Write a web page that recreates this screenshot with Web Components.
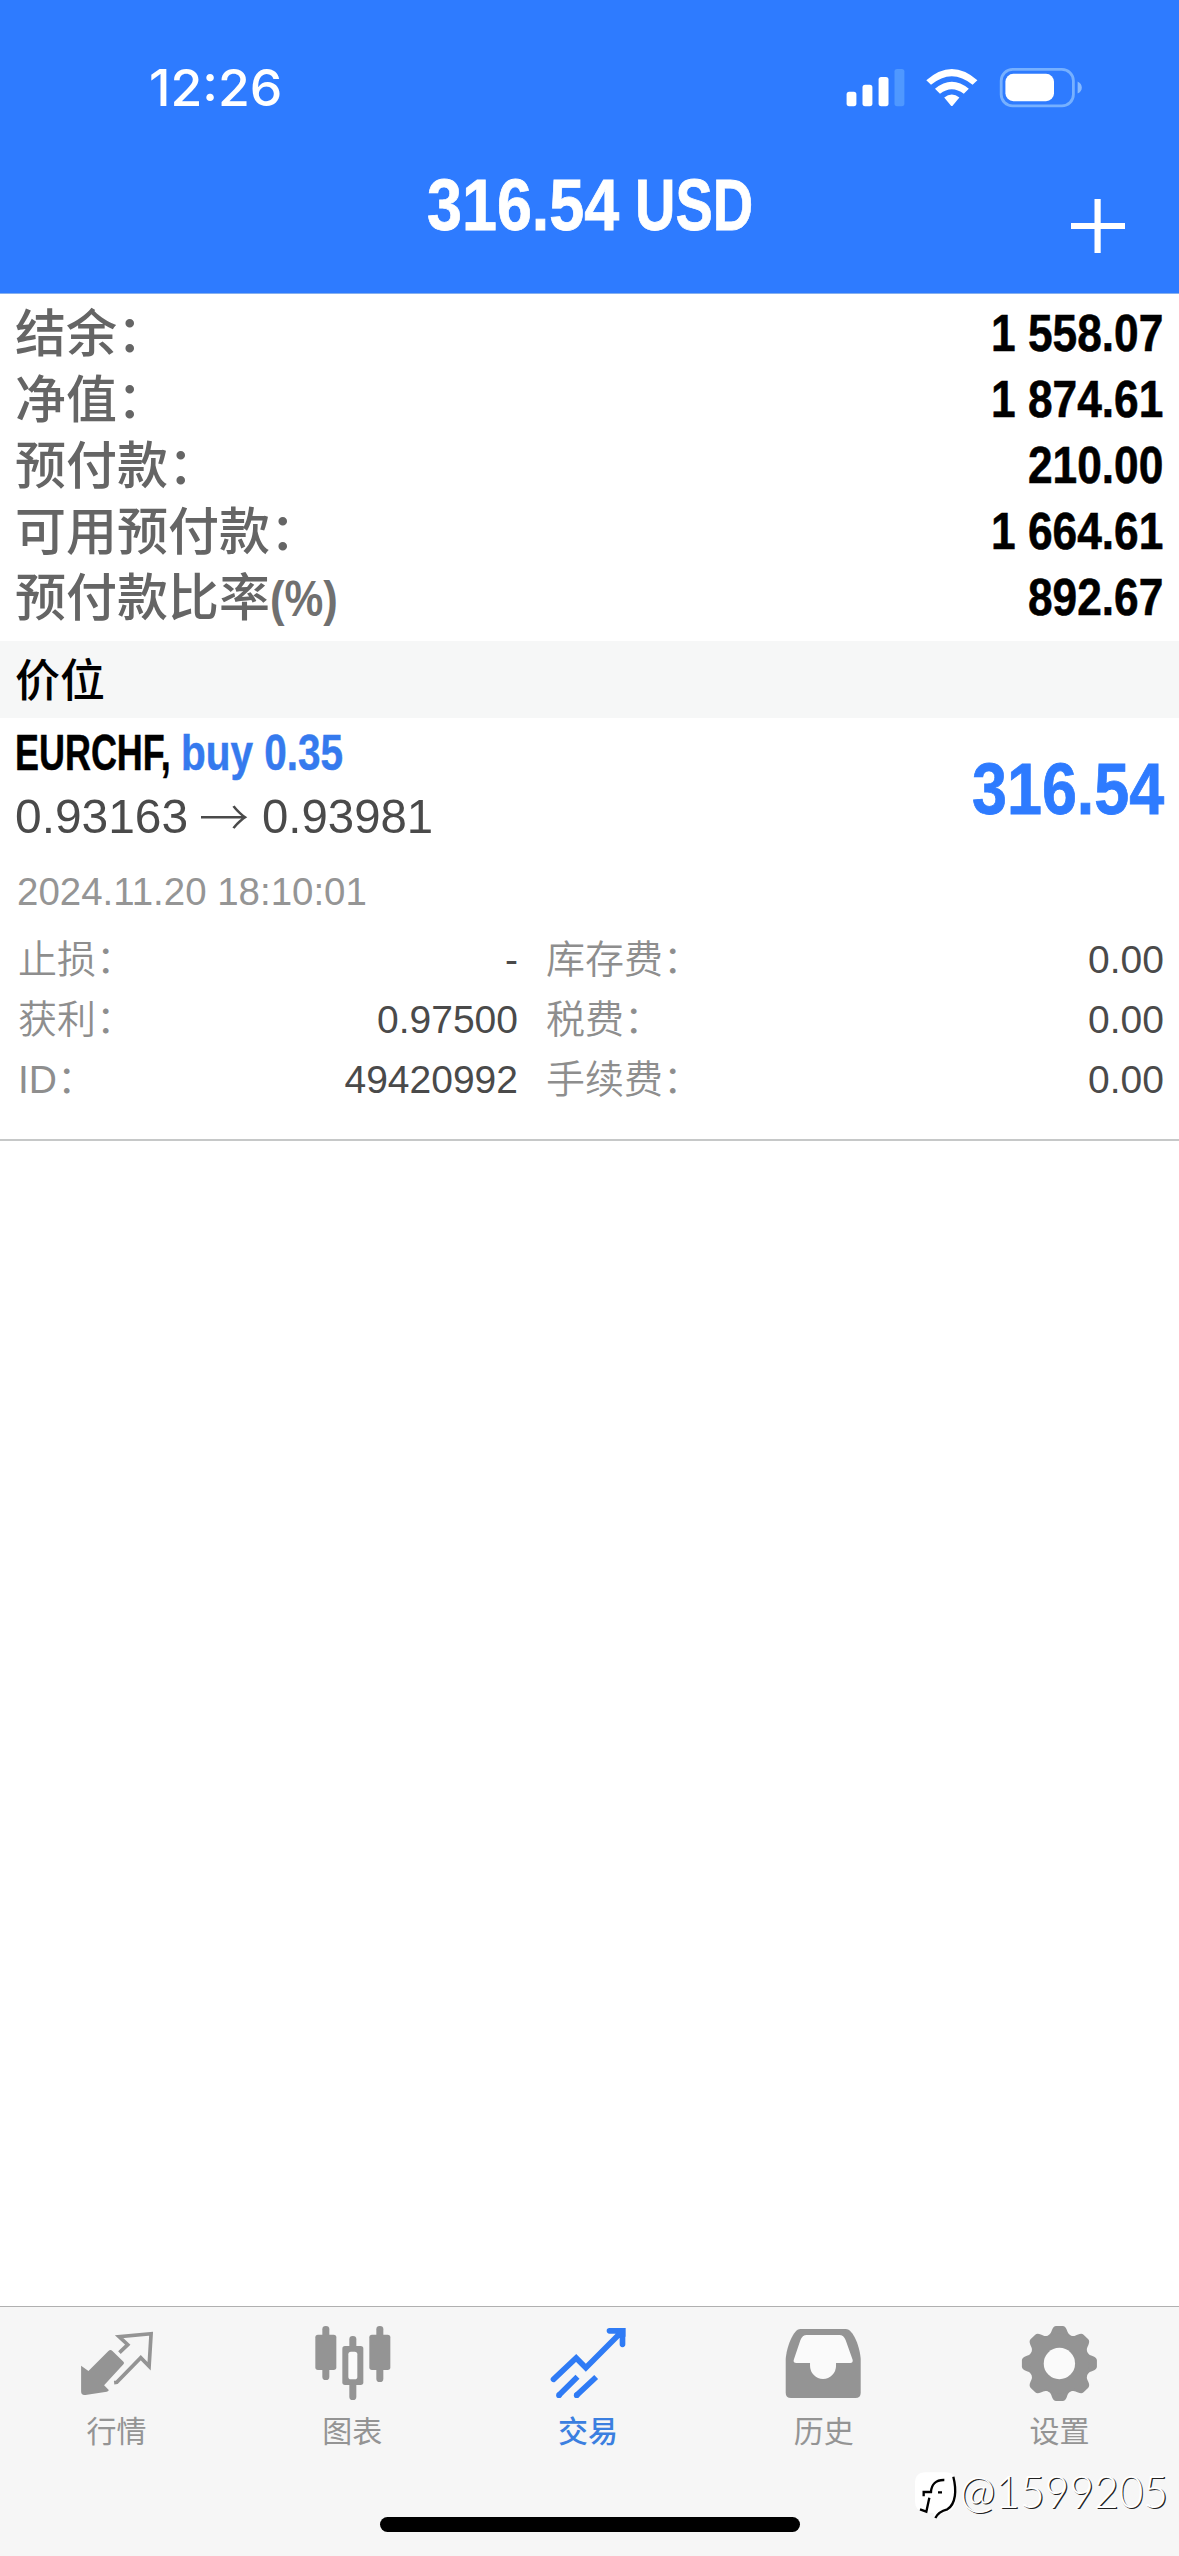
<!DOCTYPE html>
<html lang="zh-CN">
<head>
<meta charset="utf-8">
<title>316.54 USD</title>
<style>
html,body{margin:0;padding:0;background:#fff}
body{font-family:"Liberation Sans","Noto Sans CJK SC",sans-serif;width:1179px;height:2556px;overflow:hidden}
</style>
</head>
<body>
<trade-app></trade-app>
<script>
const define = (name, html, after) => customElements.define(name, class extends HTMLElement {
  constructor() {
    super();
    this.attachShadow({ mode: 'open' }).innerHTML = html;
  }
  connectedCallback() { if (after) after.call(this, this.shadowRoot); }
});

/* Text condensed or widened to the advance width given in "w" */
define('fit-text', `<style>
:host{display:inline-block;white-space:nowrap;text-align:left;flex:none}
span{display:inline-block;transform-origin:0 50%}
</style><span><slot></slot></span>`, function (root) {
  const w = +this.getAttribute('w'), s = root.querySelector('span');
  this.style.width = w + 'px';
  s.style.transform = `scaleX(${w / s.offsetWidth})`;
});

define('status-bar', `<style>
:host{display:flex;height:82px;padding:58px 94px 0 149px;justify-content:space-between;color:#fff}
.time{font:550 50.5px/60px Inter,sans-serif}
svg{display:block;width:240px;height:50px;margin-top:4px}
</style>
<fit-text class="time" w="133">12:26</fit-text>
<svg viewBox="845 62 240 50" fill="#fff">
<rect x="846.6" y="91.8" width="9.8" height="14.4" rx="2.6"/>
<rect x="862.5" y="84.8" width="9.9" height="21.4" rx="2.6"/>
<rect x="878.6" y="77" width="9.9" height="29.2" rx="2.6"/>
<rect x="894.5" y="69" width="9.9" height="37.2" rx="2.6" fill="#4f98ff"/>
<path d="M926.3 80.2Q951.8 57.6 977.4 80.2L972.6 84.8Q951.8 67.6 931 84.8Z"/>
<path d="M935 88.8Q951.8 74.8 968.8 88.8L963.8 93.7Q951.8 84.6 940 93.7Z"/>
<path d="M944.2 97.4Q951.8 91.6 959.4 97.4L952.8 105.4Q951.8 106.4 950.8 105.4Z"/>
<rect x="1001.2" y="69.3" width="72.2" height="36.6" rx="11.5" fill="none" stroke="#76b0ff" stroke-width="2.8"/>
<rect x="1005.4" y="73.8" width="48.6" height="27.4" rx="8"/>
<path d="M1077.6 81.5Q1081.8 83.5 1081.8 87.5T1077.6 93.5Z" fill="#86b9ff"/>
</svg>`);

define('nav-header', `<style>
:host{display:block;height:293px;background:#2e7bff;border-bottom:1px solid #86b0ee}
nav{display:grid;grid-template-columns:1fr auto 1fr;padding-top:25px;color:#fff}
.title{grid-column:2;display:flex;gap:16px;font:700 73px/80px "Liberation Sans Narrow","Liberation Sans",sans-serif;-webkit-text-stroke:.8px #fff}
svg{width:56px;height:56px;justify-self:end;margin:33px 53px 0 0}
</style>
<status-bar></status-bar>
<nav><div class="title"><fit-text w="192">316.54</fit-text><fit-text w="118">USD</fit-text></div>
<svg viewBox="0 0 56 56"><path d="M1 28H55M27.6 1V55" stroke="#fff" stroke-width="6.2"/></svg></nav>`);

define('summary-row', `<style>
:host{display:flex;justify-content:space-between;height:66px;line-height:66px}
.l{font:500 51px/66px "Liberation Sans","Noto Sans CJK SC",sans-serif;color:#656565}
.v{font:700 51.6px/66px "Liberation Sans Narrow","Liberation Sans",sans-serif;color:#000;-webkit-text-stroke:.6px #000;margin-top:-2px}
</style><div class="l"><slot name="label"></slot></div><div class="v"><slot name="value"></slot></div>`);

define('account-summary', `<style>
:host{display:block;height:339px;padding:8px 16px 0 15px}
.p{font-family:"Liberation Sans Narrow","Liberation Sans",sans-serif;font-weight:700;font-size:50px;color:#707070}
</style>
<summary-row><span slot="label">结余：</span><fit-text slot="value" w="172.4">1 558.07</fit-text></summary-row>
<summary-row><span slot="label">净值：</span><fit-text slot="value" w="172.4">1 874.61</fit-text></summary-row>
<summary-row><span slot="label">预付款：</span><fit-text slot="value" w="135.4">210.00</fit-text></summary-row>
<summary-row><span slot="label">可用预付款：</span><fit-text slot="value" w="172.4">1 664.61</fit-text></summary-row>
<summary-row><span slot="label">预付款比率<fit-text class="p" w="68">(%)</fit-text></span><fit-text slot="value" w="135.4">892.67</fit-text></summary-row>`);

define('section-title', `<style>
:host{display:block;height:75px;padding:2px 15px 0;background:#f6f7f7;color:#000;font:500 45px/77px "Liberation Sans","Noto Sans CJK SC",sans-serif}
</style><slot></slot>`);

define('detail-row', `<style>
:host{display:flex;justify-content:space-between;height:60px;font-size:39px;line-height:60px;white-space:nowrap}
.l{color:#8e8e8e;font-weight:350}
.v{color:#4a4a4a}
</style><span class="l"><slot name="label"></slot></span><span class="v"><slot></slot></span>`);

define('position-card', `<style>
:host{display:block;height:416px;padding:5px 0 0;border-bottom:2px solid #c6c8c8;font-family:"Liberation Sans","Noto Sans CJK SC",sans-serif}
.top{display:flex;justify-content:space-between;padding:0 15px 0 15px}
.sym{display:flex;font:700 50px/60px "Liberation Sans Narrow","Liberation Sans",sans-serif;gap:10px;color:#000;-webkit-text-stroke:.5px currentColor}
.buy{color:#357aee}
.price{display:flex;align-items:center;margin:3px 0 0;font-size:49px;line-height:60px;color:#4a4a4a}
.arrow{font-family:"Noto Sans CJK SC",sans-serif;font-weight:300;font-size:50px;line-height:60px;width:50px;margin:-5px 13px 0 11px}
.date{margin:26px 0 0 17px;font-size:38px;line-height:40px;color:#959595}
.profit{font:700 73px/80px "Liberation Sans Narrow","Liberation Sans",sans-serif;color:#2e7bff;-webkit-text-stroke:.8px currentColor;margin-top:26px}
.grid{display:grid;grid-template-columns:500px 618px;column-gap:28px;padding:18px 0 0 18px}
</style>
<div class="top"><div>
<div class="sym"><fit-text w="156">EURCHF,</fit-text><fit-text class="buy" w="162">buy 0.35</fit-text></div>
<div class="price"><fit-text w="173">0.93163</fit-text><span class="arrow">→</span><fit-text w="171">0.93981</fit-text></div>
</div><fit-text class="profit" w="192">316.54</fit-text></div>
<div class="date"><fit-text w="350">2024.11.20 18:10:01</fit-text></div>
<div class="grid">
<detail-row><span slot="label">止损：</span>-</detail-row>
<detail-row><span slot="label">库存费：</span>0.00</detail-row>
<detail-row><span slot="label">获利：</span>0.97500</detail-row>
<detail-row><span slot="label">税费：</span>0.00</detail-row>
<detail-row><span slot="label">ID：</span>49420992</detail-row>
<detail-row><span slot="label">手续费：</span>0.00</detail-row>
</div>`);

define('tab-item', `<style>
:host{display:flex;flex:1;flex-direction:column;align-items:center;gap:8px;color:#949494}
:host([active]){color:#2f7bf5}
div{width:80px;height:84px}
span{font:400 30px/40px "Liberation Sans","Noto Sans CJK SC",sans-serif;margin-left:-3px}
:host([active]) span{font-weight:500;color:#3b7fe0}
</style><div><slot name="icon"></slot></div><span><slot></slot></span>`);

define('tab-bar', `<style>
:host{display:block;height:249px;background:#f6f6f6;border-top:1px solid #b0b0b0}
.tabs{display:flex;padding-top:13px}
svg{display:block;width:80px;height:84px}
.home{width:420px;height:15px;border-radius:8px;background:#000;margin:65px auto 0}
</style>
<div class="tabs">
<tab-item><svg slot="icon" viewBox="233.7 90 240 252" fill="currentColor">
<path d="M243 227L265 243L325 183Q331 177 337 183L370 215Q374 219 370 223L312 286L326 300Q326 304 320 305L256 315Q243 317 243 304Z"/>
<path d="M358 188L383 164L357 140L453 131L447 229L422 203L350 277L342 278" fill="none" stroke="currentColor" stroke-width="11"/></svg>行情</tab-item>
<tab-item><svg slot="icon" viewBox="941 90 240 252" fill="currentColor">
<rect x="966" y="108" width="21" height="162" rx="10"/><rect x="945" y="134" width="63" height="106" rx="8"/>
<rect x="1047" y="138" width="21" height="192" rx="10"/><rect x="1026" y="168" width="63" height="117" rx="8"/><rect x="1044" y="185" width="27" height="83" rx="8" fill="#fafafa"/>
<rect x="1128" y="108" width="21" height="168" rx="10"/><rect x="1107" y="134" width="63" height="106" rx="8"/></svg>图表</tab-item>
<tab-item active><svg slot="icon" viewBox="328.5 90 240 252" fill="none" stroke="currentColor" stroke-width="17">
<path d="M342 268L410 204L439 233L545 127M510 122.5H549V163" stroke-linecap="round"/>
<path d="M536 114H558V140L530 142Z" fill="currentColor" stroke="none"/>
<path d="M358 316L414 260M411 316L470 261"/>
<g fill="currentColor" stroke="none"><circle cx="358.5" cy="315.5" r="8.5"/><circle cx="411.5" cy="315.5" r="8.5"/></g></svg>交易</tab-item>
<tab-item><svg slot="icon" viewBox="75.9 90 240 252" fill="currentColor" fill-rule="evenodd">
<path d="M78 207C80 175 100 117 122 117H258C282 117 301 175 303 207V308Q303 324 287 324H94Q78 324 78 308Z"/>
<path fill="#fafafa" d="M102 210L122 151Q128 135 141 135H239Q252 135 258 151L279 210Q280 219 272 219H229V227A39 40 0 0 1 151 227V219H110Q100 219 102 210Z"/></svg>历史</tab-item>
<tab-item><svg slot="icon" viewBox="783.3 90 240 252" fill="currentColor"><g class="gear" transform="translate(898.5 220.5)"><circle r="89"/><circle r="47" fill="#fafafa"/></g></svg>设置</tab-item>
</div><div class="home"></div>`, function (root) {
  const gear = root.querySelector('.gear');
  for (let i = 0; i < 8; i++) {
    const tooth = document.createElementNS('http://www.w3.org/2000/svg', 'path');
    tooth.setAttribute('d', 'M-38 -78L-34 -84C-26 -88 -25 -93 -22 -101Q-18 -112 -10 -112.500H10Q18 -112 22 -101C25 -93 26 -88 34 -84L38 -78Z');
    tooth.setAttribute('transform', `rotate(${i * 45})`);
    gear.prepend(tooth);
  }
});

define('user-mark', `<style>
:host{position:absolute;left:914px;top:2466px;display:flex;align-items:center;height:54px}
svg{width:46px;height:54px}
.t{font:300 45px/54px Lato,sans-serif;color:#fff;text-shadow:1.3px .8px 0 #222;margin-top:-4px}
</style>
<svg viewBox="462 528 138 162" fill="none" stroke="#000" stroke-width="7">
<path d="M497 547H557Q587 547 587 580V630Q587 664 550 668L524 684L520 668H497Q465 664 465 635V580Q465 547 497 547Z" fill="#fff" stroke="none"/>
<path d="M491 619V606H513C514 584 528 569 553 570M534 607H546M508 623L499 665L480 658M580 560C590 600 588 642 562 658Q535 665 526 684"/></svg>
<fit-text class="t" w="208">@1599205</fit-text>`);

define('trade-app', `<style>
:host{display:flex;flex-direction:column;width:1179px;height:2556px;background:#fff;position:relative}
main{flex:1}
</style>
<nav-header></nav-header>
<main>
<account-summary></account-summary>
<section-title>价位</section-title>
<position-card></position-card>
</main>
<tab-bar></tab-bar>
<user-mark></user-mark>`);
</script>
</body>
</html>
